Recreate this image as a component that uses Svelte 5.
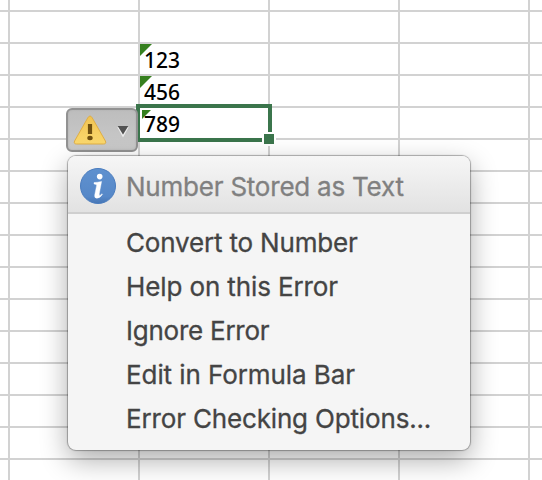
<script>
  const rows = Array.from({ length: 16 }, (_, i) => i);
  const cols = [0, 1, 2, 3, 4, 5];
  const values = { 2: '123', 3: '456', 4: '789' };
  const items = [
    { label: 'Convert to Number', spacing: -0.17 },
    { label: 'Help on this Error', spacing: -0.12 },
    { label: 'Ignore Error', spacing: -0.24 },
    { label: 'Edit in Formula Bar', spacing: -0.08 },
    { label: 'Error Checking Options...', spacing: -0.16 }
  ];
</script>

<main>
  <div class="sheet">
    {#each rows as r}
      {#each cols as c}
        <div class="cell" class:active={r === 4 && c === 2}>
          {#if c === 2 && values[r]}
            <i class="flag"></i><span class="value">{values[r]}</span>
          {/if}
        </div>
      {/each}
    {/each}
  </div>

  <div class="selection"><i class="handle"></i></div>

  <button class="smart" aria-label="Error options">
    <svg width="72" height="44" viewBox="0 0 72 44">
      <defs>
        <linearGradient id="warn" x1="0" y1="0" x2="0" y2="1">
          <stop offset="0" stop-color="#efc252" />
          <stop offset="1" stop-color="#fbd96e" />
        </linearGradient>
      </defs>
      <path d="M21.8 9.800Q24 6.200 26.200 9.800L39.400 33Q40.600 36 37.400 36H10.600Q7.400 36 8.600 33Z" fill="url(#warn)" stroke="#dfae45" stroke-width="1" />
      <path d="M21.900 16H26.100V26H21.900Z" fill="#70500f" />
      <ellipse cx="24" cy="30" rx="2.700" ry="2.200" fill="#70500f" />
      <path d="M52 19L57 28L62 19" fill="none" stroke="#ededed" stroke-width="1.500" />
      <path d="M51.700 18H62.300L57 26.500Z" fill="#525252" />
    </svg>
  </button>

  <section class="popup">
    <header>
      <svg width="36" height="36" viewBox="0 0 36 36">
        <defs>
          <linearGradient id="info" x1="0" y1="0" x2="0" y2="1">
            <stop offset="0" stop-color="#5f91cf" />
            <stop offset=".8" stop-color="#5688c8" />
            <stop offset="1" stop-color="#4676b5" />
          </linearGradient>
        </defs>
        <circle cx="18" cy="18" r="17.500" fill="url(#info)" stroke="#4a7cbe" />
        <circle cx="19.700" cy="8.600" r="2.800" fill="#fff" />
        <path d="M14 14.600Q17.500 14.300 21.600 13.400L19.300 25.500Q18.900 27.900 20 27.500Q20.800 27.100 21.900 25.700L22.500 26.300Q20 30.400 16.700 30.200Q14.200 30 14.700 26.900L16.600 17.700Q16.900 16.100 14 16Z" fill="#fff" stroke="#fff" stroke-width=".4" />
      </svg>
      <span class="title">Number Stored as Text</span>
    </header>
    <ul>
      {#each items as item}
        <li><span style="letter-spacing: {item.spacing}px">{item.label}</span></li>
      {/each}
    </ul>
  </section>
</main>

<style>
  :global(body) { margin: 0; background: #fff; }
  main {
    position: relative;
    width: 542px;
    height: 480px;
    overflow: hidden;
    font-family: Inter, "Liberation Sans", sans-serif;
  }
  .sheet {
    display: grid;
    width: 660px;
    grid-template-columns: 10px repeat(5, 130px);
    grid-template-rows: 12px;
    grid-auto-rows: 32px;
  }
  .cell {
    position: relative;
    box-sizing: border-box;
    border-right: 2px solid #d2d2d2;
    border-bottom: 2px solid #d2d2d2;
    background: #fff;
  }
  .flag {
    position: absolute;
    left: 0;
    top: 0;
    width: 12px;
    height: 12px;
    background: #36801f;
    clip-path: polygon(0 0, 100% 0, 0 100%);
  }
  .active .flag { left: 2px; top: 2px; width: 9px; height: 9px; }
  .value {
    position: relative;
    display: block;
    padding-left: 4px;
    font: 500 21px/32px "Noto Sans", sans-serif;
    color: #000;
  }
  .selection {
    position: absolute;
    left: 136px;
    top: 104px;
    width: 136px;
    height: 38px;
    box-sizing: border-box;
    border: 4px solid #3b754c;
  }
  .handle {
    position: absolute;
    right: -6px;
    bottom: -6px;
    width: 10px;
    height: 10px;
    background: #3b754c;
    box-shadow: 0 0 0 2px #fff;
  }
  .smart {
    position: absolute;
    left: 66px;
    top: 108px;
    width: 72px;
    height: 44px;
    box-sizing: border-box;
    padding: 0;
    border: 2px solid #929292;
    border-radius: 6px;
    background: linear-gradient(#bdbdbd, #cacaca);
    box-shadow: inset 0 0 2px #aaa;
  }
  .smart svg { display: block; margin: -2px; }
  .popup {
    position: absolute;
    left: 68px;
    top: 156px;
    width: 402px;
    height: 294px;
    border-radius: 8px;
    background: #f5f5f5;
    box-shadow: 0 0 1px 1px rgba(0, 0, 0, 0.3), 0 10px 28px rgba(0, 0, 0, 0.33);
  }
  header {
    display: flex;
    align-items: center;
    box-sizing: border-box;
    height: 58px;
    padding: 4px 0 0 12px;
    gap: 10px;
    border-bottom: 2px solid #cfcfcf;
    border-radius: 8px 8px 0 0;
    background: linear-gradient(#f6f6f6, #e2e2e2);
  }
  .title {
    padding-top: 2px;
    font-size: 26px;
    line-height: 36px;
    letter-spacing: -0.22px;
    color: #808080;
    -webkit-text-stroke: 0.3px #808080;
    white-space: nowrap;
  }
  ul { list-style: none; margin: 0; padding: 7px 0 0 58px; }
  li {
    height: 44px;
    font-size: 26px;
    line-height: 44px;
    color: #444;
    -webkit-text-stroke: 0.3px #444;
    white-space: nowrap;
  }
</style>
